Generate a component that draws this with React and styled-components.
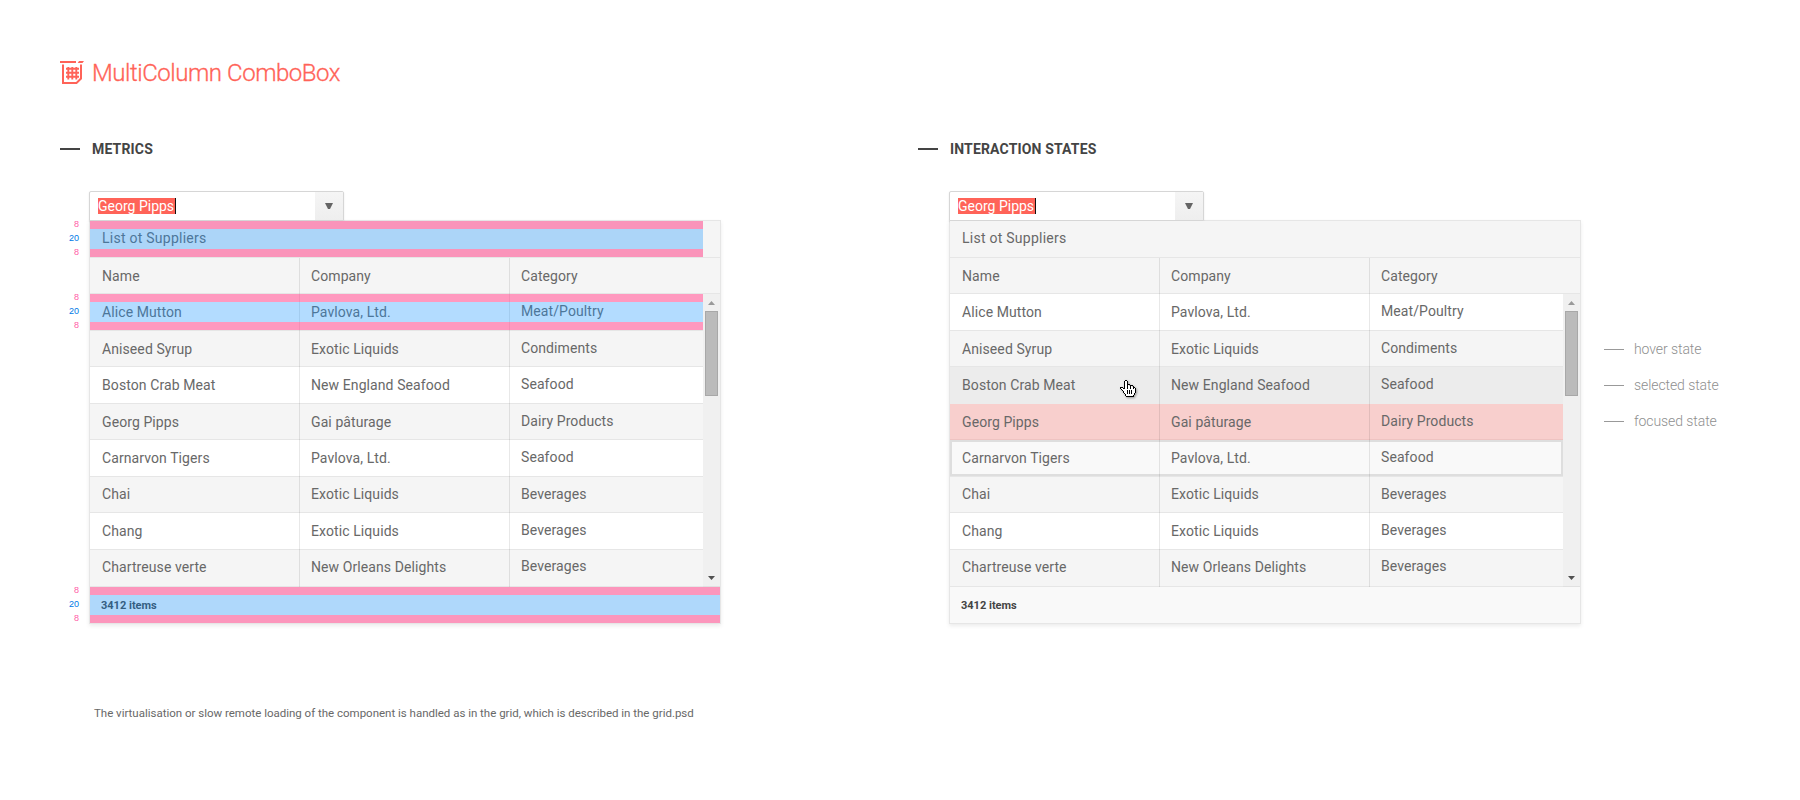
import React from "react";
import styled, { createGlobalStyle, css } from "styled-components";

const Global = createGlobalStyle`
  *, *::before, *::after { box-sizing: border-box; }
  body { margin: 0; background: #fff; font-family: Roboto, "Liberation Sans", sans-serif; color: #686868; }
`;

const Page = styled.main`
  width: 1800px;
  height: 800px;
  padding: 56px 60px 0;
  overflow: hidden;
`;

const Title = styled.h1`
  display: flex;
  align-items: center;
  gap: 8px;
  height: 34px;
  margin: 0;
  color: #ff6358;
  font-size: 24px;
  font-weight: 300;
  letter-spacing: -0.45px;
  line-height: 34px;
  white-space: nowrap;
  -webkit-text-stroke: 0.3px #ff6358;
`;

const Columns = styled.div`
  display: flex;
  margin-top: 48px;
`;

const Section = styled.section`
  width: ${(p) => p.$width}px;
  flex: none;
`;

const Heading = styled.h2`
  display: flex;
  align-items: center;
  gap: 12px;
  height: 22px;
  margin: 0;
  color: #444;
  font-size: 14px;
  font-weight: 700;
  letter-spacing: 0.16px;
  line-height: 22px;
  &::before {
    content: "";
    width: 20px;
    height: 2px;
    background: #444;
  }
`;

const Demo = styled.div`
  display: flex;
  margin-top: 31px;
`;

const Rail = styled.div`
  width: ${(p) => p.$width}px;
  flex: none;
  padding-top: 29px;
`;

const Measure = styled.div`
  display: flex;
  flex-direction: column;
  align-items: flex-end;
  height: 36px;
  margin-bottom: ${(p) => p.$after || 0}px;
  padding-right: 10px;
  font: 9px/8px "Liberation Sans", sans-serif;
  color: #ff5ca6;
`;

const MeasureMain = styled.span`
  color: #0078e6;
  line-height: 20px;
`;

const Widget = styled.div`
  width: 632px;
  flex: none;
`;

const Combo = styled.div`
  position: relative;
  display: flex;
  align-items: stretch;
  width: 255px;
  height: 30px;
  border: 1px solid #d6d6d6;
  border-radius: 2px 2px 0 0;
  background: #fff;
  box-shadow: 0 1px 2px rgba(0, 0, 0, 0.1);
`;

const ComboInput = styled.div`
  flex: 1;
  padding: 6px 8px;
`;

const Selection = styled.span`
  display: block;
  width: 78px;
  height: 16px;
  border-right: 1px solid #111;
  background: #ff6358;
  color: #fff;
  font-size: 14px;
  line-height: 17px;
  white-space: nowrap;
`;

const ComboButton = styled.div`
  display: flex;
  align-items: center;
  justify-content: center;
  width: 28px;
  background: linear-gradient(#f5f5f5, #eeeeee);
`;

const Panel = styled.div`
  margin-top: -1px;
  border: 1px solid #e6e6e6;
  box-shadow: 0 2px 4px rgba(0, 0, 0, 0.08);
  font-size: 14px;
  letter-spacing: 0.09px;
`;

const Bar = styled.div`
  position: relative;
  height: 37px;
  padding-left: 12px;
  border-bottom: 1px solid #e6e6e6;
  background: #f5f5f5;
  letter-spacing: 0.25px;
  line-height: 35px;
`;

const Footer = styled(Bar)`
  height: 36px;
  padding-left: 11px;
  border-bottom: 0;
  background: #f9f9f9;
  color: #444;
  font-size: 11px;
  font-weight: 700;
  letter-spacing: 0;
  line-height: 37px;
`;

const Bands = styled.div`
  position: absolute;
  top: 0;
  left: 0;
  width: ${(p) => p.$width}px;
  height: 36px;
  border: solid rgba(255, 51, 128, 0.5);
  border-width: 8px 0;
  background: rgba(24, 150, 255, 0.33);
  background-clip: padding-box;
`;

const Row = styled.div`
  position: relative;
  display: flex;
  height: ${(p) => p.$height}px;
  border-bottom: 1px solid #e6e6e6;
  background: ${(p) => (p.$odd ? "#f5f5f5" : "#fff")};
  ${(p) => p.$state === "hover" && css`background: #ececec; border-color: #ececec;`}
  ${(p) => p.$state === "selected" && css`background: #f8cfcd; border-color: #eec3c1;`}
  ${(p) => p.$state === "focused" && css`background: #f9f9f9; box-shadow: inset 0 0 0 2px #dedede;`}
`;

const Cell = styled.div`
  width: ${(p) => p.$width}px;
  height: calc(100% + 1px);
  padding-left: ${(p) => p.$pad}px;
  border-right: ${(p) => (p.$last ? "0" : "1px solid rgba(0, 0, 0, 0.09)")};
  line-height: ${(p) => p.$line}px;
  white-space: nowrap;
`;

const Body = styled.div`
  display: flex;
  height: 293px;
`;

const Rows = styled.div`
  width: 613px;
`;

const Scrollbar = styled.div`
  display: flex;
  flex-direction: column;
  align-items: center;
  justify-content: space-between;
  width: 17px;
  padding: 7px 0 6px;
  background: #f0f0f0;
  border-bottom: 1px solid #e0e0e0;
`;

const ScrollTop = styled.div`
  display: flex;
  flex-direction: column;
  align-items: center;
  gap: 6px;
`;

const Thumb = styled.div`
  width: 13px;
  height: 85px;
  border: 1px solid #a8a8a8;
  background: #bbb;
`;

const Pointer = styled.svg`
  position: absolute;
  left: 170px;
  top: 13px;
  filter: drop-shadow(1px 1px 1px rgba(0, 0, 0, 0.35));
`;

const Notes = styled.div`
  padding: 140px 0 0 23px;
`;

const Note = styled.div`
  display: flex;
  align-items: center;
  gap: 10px;
  height: 36px;
  color: #8f8f8f;
  font-size: 14px;
  font-weight: 300;
  letter-spacing: -0.08px;
  line-height: 16px;
  white-space: nowrap;
  &::before {
    content: "";
    width: 20px;
    height: 1px;
    margin-top: 1px;
    background: #999;
  }
`;

const Caption = styled.p`
  margin: 80px 0 0 34px;
  font-size: 11.5px;
  letter-spacing: -0.01px;
  line-height: 18px;
  white-space: nowrap;
`;

const DATA = [
  { values: ["Alice Mutton", "Pavlova, Ltd.", "Meat/Poultry"], height: 37, lines: [36, 35] },
  { values: ["Aniseed Syrup", "Exotic Liquids", "Condiments"], height: 36, lines: [36, 34] },
  { values: ["Boston Crab Meat", "New England Seafood", "Seafood"], height: 37, lines: [36, 34] },
  { values: ["Georg Pipps", "Gai pâturage", "Dairy Products"], height: 36, lines: [36, 34] },
  { values: ["Carnarvon Tigers", "Pavlova, Ltd.", "Seafood"], height: 37, lines: [36, 34] },
  { values: ["Chai", "Exotic Liquids", "Beverages"], height: 36, lines: [34, 34] },
  { values: ["Chang", "Exotic Liquids", "Beverages"], height: 37, lines: [36, 34] },
  { values: ["Chartreuse verte", "New Orleans Delights", "Beverages"], height: 37, lines: [34, 32] },
];

function Cells({ values, lines }) {
  return (
    <>
      <Cell $width={210} $pad={12} $line={lines[0]}>{values[0]}</Cell>
      <Cell $width={210} $pad={11} $line={lines[0]}>{values[1]}</Cell>
      <Cell $width={193} $pad={11} $line={lines[1]} $last>{values[2]}</Cell>
    </>
  );
}

function Hand() {
  return (
    <Pointer width="17" height="18" viewBox="0 0 17 18" shapeRendering="crispEdges">
      <path d="M5 1h2v4h2v1h3v1h2v1h1v5h-1v3H6v-2H5v-1H4v-2H3v-1H1V8h3v1h1z" fill="#fff" />
      <path
        d="M5 0h2v1H5zM4 1h1v8H4zM7 1h1v8H7zM8 4h2v1H8zM10 5h1v4h-1zM11 5h2v1h-2zM13 6h1v3h-1zM14 7h1v1h-1zM15 8h1v5h-1zM14 13h1v2h-1zM13 15h1v2h-1zM6 16h8v1H6zM5 14h1v2H5zM4 13h1v1H4zM3 11h1v2H3zM2 10h1v1H2zM1 9h1v1H1zM0 7h1v2H0zM1 7h2v1H1zM3 8h1v1H3zM7 10h1v4H7zM9 10h1v4H9zM11 10h1v4h-1z"
        fill="#000"
      />
    </Pointer>
  );
}

function MultiColumn({ metrics, states = {} }) {
  return (
    <Widget>
      <Combo>
        <ComboInput><Selection>Georg Pipps</Selection></ComboInput>
        <ComboButton>
          <svg width="8" height="6" viewBox="0 0 8 6"><path d="M0 0h8L5 6H3z" fill="#656565" /></svg>
        </ComboButton>
      </Combo>
      <Panel>
        <Bar>List ot Suppliers{metrics && <Bands $width={613} />}</Bar>
        <Row $height={36} $odd><Cells values={["Name", "Company", "Category"]} lines={[37, 36]} /></Row>
        <Body>
          <Rows>
            {DATA.map((row, i) => (
              <Row key={row.values[0]} $height={row.height} $odd={i % 2 === 1} $state={states[i]}>
                <Cells values={row.values} lines={row.lines} />
                {metrics && i === 0 && <Bands $width={613} />}
                {states[i] === "hover" && <Hand />}
              </Row>
            ))}
          </Rows>
          <Scrollbar>
            <ScrollTop>
              <svg width="7" height="4" viewBox="0 0 7 4"><path d="M3.500 0L7 4H0z" fill="#999" /></svg>
              <Thumb />
            </ScrollTop>
            <svg width="7" height="4" viewBox="0 0 7 4"><path d="M0 0h7L3.500 4z" fill="#505050" /></svg>
          </Scrollbar>
        </Body>
        <Footer>3412 items{metrics && <Bands $width={630} />}</Footer>
      </Panel>
    </Widget>
  );
}

function Sizes({ after }) {
  return <Measure $after={after}>8<MeasureMain>20</MeasureMain>8</Measure>;
}

export default function App() {
  return (
    <Page>
      <Global />
      <Title>
        <svg width="24" height="24" viewBox="0 0 24 24" fill="none" stroke="#ff6358">
          <path d="M0 1h16M3 3.500v18.500h13.500l4.500-4.500V3.500" strokeWidth="2" />
          <path d="M19 0h5l-1.500 2H17.700z" fill="#ff6358" stroke="none" />
          <path d="M6 7.800h13M6 11.800h13M6 15.800h13M8.300 6v12.500M12.300 6v12.500M16.300 6v12.500" strokeWidth="1.900" />
        </svg>
        MultiColumn ComboBox
      </Title>
      <Columns>
        <Section $width={858}>
          <Heading>METRICS</Heading>
          <Demo>
            <Rail $width={29}>
              <Sizes after={37} />
              <Sizes after={257} />
              <Sizes />
            </Rail>
            <MultiColumn metrics />
          </Demo>
          <Caption>The virtualisation or slow remote loading of the component is handled as in the grid, which is described in the grid.psd</Caption>
        </Section>
        <Section $width={822}>
          <Heading>INTERACTION STATES</Heading>
          <Demo>
            <Rail $width={31} />
            <MultiColumn states={{ 2: "hover", 3: "selected", 4: "focused" }} />
            <Notes>
              <Note>hover state</Note>
              <Note>selected state</Note>
              <Note>focused state</Note>
            </Notes>
          </Demo>
        </Section>
      </Columns>
    </Page>
  );
}
